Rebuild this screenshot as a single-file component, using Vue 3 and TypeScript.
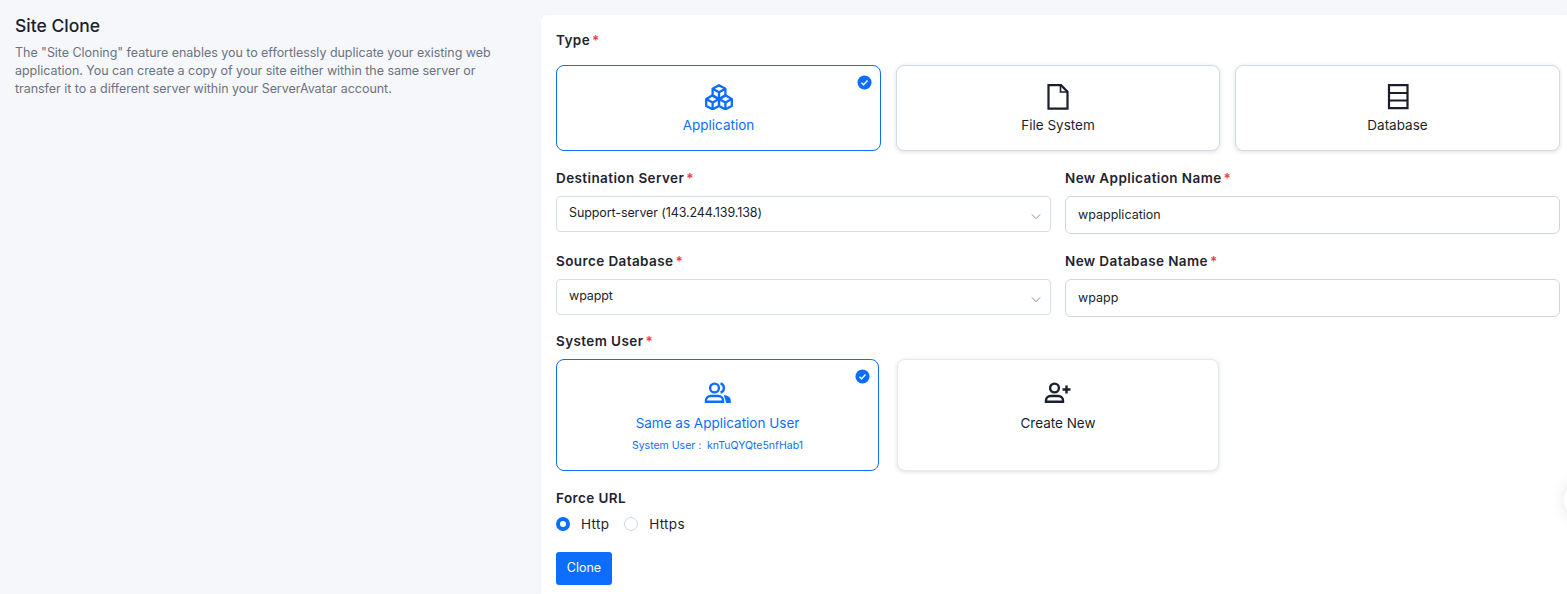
<script setup lang="ts">
import { ref } from 'vue'

const cloneType = ref('application')
const systemUser = ref('same')
const forceUrl = ref('http')

const typeOptions = [
  { id: 'application', label: 'Application' },
  { id: 'file', label: 'File System' },
  { id: 'database', label: 'Database' },
]
</script>

<template>
  <div class="page">
    <aside class="intro">
      <h1>Site Clone</h1>
      <p>The "Site Cloning" feature enables you to effortlessly duplicate your existing web application. You can create a copy of your site either within the same server or transfer it to a different server within your ServerAvatar account.</p>
    </aside>

    <main class="panel">
      <label class="label">Type<span class="req">*</span></label>
      <div class="type-grid">
        <button
          v-for="opt in typeOptions"
          :key="opt.id"
          class="card"
          :class="{ active: cloneType === opt.id }"
          @click="cloneType = opt.id"
        >
          <svg v-if="cloneType === opt.id" class="tick" viewBox="0 0 16 16">
            <circle cx="8" cy="8" r="7.5" fill="#0d6efd" />
            <path d="M4.8 8.3l2.2 2.1 4.2-4.5" fill="none" stroke="#fff" stroke-width="1.5" />
          </svg>
          <svg v-if="opt.id === 'application'" class="icon" viewBox="0 0 28 26" fill="none" stroke="currentColor" stroke-width="2.3" stroke-linejoin="round">
            <path d="M14 1.2l6.4 3.5v7L14 15.2l-6.4-3.5v-7z" />
            <path d="M7.6 4.7l6.4 3.6 6.4-3.6M14 8.3v6.9" />
            <path d="M7.6 11.3l6.4 3.6v7l-6.4 3.4-6.4-3.4v-7z" />
            <path d="M1.2 14.9l6.4 3.5 6.4-3.5M7.6 18.4v6.9" />
            <path d="M20.4 11.3l6.4 3.6v7l-6.4 3.4-6.4-3.4v-7z" />
            <path d="M14 14.9l6.4 3.5 6.4-3.5M20.4 18.4v6.9" />
          </svg>
          <svg v-else-if="opt.id === 'file'" class="icon" viewBox="0 0 28 26" fill="none" stroke="currentColor" stroke-width="2.2">
            <path d="M4.5 1.2h12.5l6.5 6.5v17h-19z" />
            <path d="M16.5 1.2v6.8h7" stroke-width="1.6" />
          </svg>
          <svg v-else class="icon" viewBox="0 0 28 26" fill="none" stroke="currentColor" stroke-width="2.2">
            <path d="M5 1.2h18.5v23H5z" />
            <path d="M5 9h18.5M5 16.5h18.5" />
          </svg>
          <span class="card-title">{{ opt.label }}</span>
        </button>
      </div>

      <div class="fields">
        <div class="field">
          <label class="label">Destination Server<span class="req">*</span></label>
          <div class="select">
            <span>Support-server (143.244.139.138)</span>
            <svg class="chevron" viewBox="0 0 12 8"><path d="M1 1.5l5 5 5-5" fill="none" stroke="#7d838c" stroke-width="1.1" /></svg>
          </div>
        </div>
        <div class="field">
          <label class="label">New Application Name<span class="req">*</span></label>
          <input class="input" value="wpapplication" />
        </div>
        <div class="field">
          <label class="label">Source Database<span class="req">*</span></label>
          <div class="select">
            <span>wpappt</span>
            <svg class="chevron" viewBox="0 0 12 8"><path d="M1 1.5l5 5 5-5" fill="none" stroke="#7d838c" stroke-width="1.1" /></svg>
          </div>
        </div>
        <div class="field">
          <label class="label">New Database Name<span class="req">*</span></label>
          <input class="input" value="wpapp" />
        </div>
      </div>

      <label class="label">System User<span class="req">*</span></label>
      <div class="user-grid">
        <button class="card tall" :class="{ active: systemUser === 'same' }" @click="systemUser = 'same'">
          <svg v-if="systemUser === 'same'" class="tick" viewBox="0 0 16 16">
            <circle cx="8" cy="8" r="7.5" fill="#0d6efd" />
            <path d="M4.8 8.3l2.2 2.1 4.2-4.5" fill="none" stroke="#fff" stroke-width="1.5" />
          </svg>
          <svg class="icon small" viewBox="0 0 28 21" fill="none" stroke="currentColor" stroke-width="2.4">
            <circle cx="10.5" cy="6" r="4.4" />
            <path d="M2 19.800v-1.300c0-2.600 2-4.500 4.600-4.500h7.800c2.600 0 4.600 1.900 4.600 4.500v1.300H2z" />
            <path d="M16.500 1.400a4.800 4.800 0 0 1 0 9.200" />
            <path d="M20 13.600c3.300.4 6.200 2.200 6.200 5.200v2.200h-4" fill="currentColor" stroke-width="1.200" />
          </svg>
          <span class="card-title">Same as Application User</span>
          <span class="card-sub" v-if="systemUser === 'same'">System User :&nbsp; knTuQYQte5nfHab1</span>
        </button>
        <button class="card tall" :class="{ active: systemUser === 'new' }" @click="systemUser = 'new'">
          <svg class="icon small" viewBox="0 0 28 21" fill="none" stroke="currentColor" stroke-width="2.4">
            <circle cx="10.500" cy="6" r="4.400" />
            <path d="M2 19.800v-1.300c0-2.600 2-4.500 4.600-4.500h7.800c2.600 0 4.600 1.900 4.600 4.500v1.300H2z" />
            <path d="M22.500 3.500v8M18.500 7.500h8" />
          </svg>
          <span class="card-title">Create New</span>
        </button>
      </div>

      <label class="label force">Force URL</label>
      <div class="radios">
        <label class="radio" @click="forceUrl = 'http'">
          <span class="dot" :class="{ on: forceUrl === 'http' }"></span>Http
        </label>
        <label class="radio" @click="forceUrl = 'https'">
          <span class="dot" :class="{ on: forceUrl === 'https' }"></span>Https
        </label>
      </div>

      <button class="clone">Clone</button>
    </main>

    <div class="chat-shadow"></div>
  </div>
</template>

<style>
html,
body {
  margin: 0;
  overflow: hidden;
}
</style>

<style scoped>
.page {
  display: grid;
  grid-template-columns: 541px 1fr;
  height: 594px;
  padding-top: 15px;
  box-sizing: border-box;
  background: #f6f7fb;
  font-family: Inter, "Liberation Sans", sans-serif;
  color: #1a1f2b;
  overflow: hidden;
  position: relative;
}

.intro {
  padding: 1px 46px 0 15px;
}

.intro h1 {
  margin: 0;
  font-size: 17.5px;
  line-height: 20px;
  font-weight: 500;
}

.intro p {
  margin: 8px 0 0;
  font-size: 12.5px;
  line-height: 18px;
  color: #6c727e;
  letter-spacing: -0.04px;
}

.panel {
  background: #fff;
  border-radius: 6px 0 0 0;
  padding: 16px 7px 0 15px;
  box-shadow: 0 0 2px rgba(40, 50, 80, 0.05);
}

.label {
  display: block;
  font-size: 13.5px;
  line-height: 18px;
  font-weight: 600;
  letter-spacing: 0.4px;
  color: #1f2430;
}

.req {
  color: #f0394a;
  margin-left: 2px;
}

.type-grid {
  display: grid;
  grid-template-columns: 325px 324px 325px;
  gap: 15px;
  margin-top: 16px;
}

.card {
  position: relative;
  display: flex;
  flex-direction: column;
  align-items: center;
  height: 86px;
  padding: 18px 0 0;
  box-sizing: border-box;
  background: #fff;
  border: 1px solid #d3dae6;
  border-radius: 8px;
  box-shadow: 0 1px 4px rgba(40, 50, 80, 0.16);
  color: #1a1f2b;
  font-family: inherit;
  cursor: pointer;
}

.card.active {
  border-color: #0d6efd;
  color: #0d6efd;
  box-shadow: none;
}

.card.tall {
  height: 112px;
  padding-top: 22px;
}

.card.tall:not(.active) {
  border-color: #e6e9f0;
}

.tick {
  position: absolute;
  top: 9px;
  right: 8px;
  width: 15px;
  height: 15px;
}

.icon {
  width: 28px;
  height: 26px;
}

.icon.small {
  height: 21px;
}

.card-title {
  margin-top: 7px;
  font-size: 13.5px;
  line-height: 16px;
}

.tall .card-title {
  margin-top: 12px;
}

.card-sub {
  margin-top: 8px;
  font-size: 10.5px;
  line-height: 13px;
}

.fields {
  display: grid;
  grid-template-columns: 495px 495px;
  column-gap: 14px;
  row-gap: 18px;
  margin-top: 18px;
  margin-bottom: 15px;
}

.field .label {
  margin-bottom: 9px;
}

.select,
.input {
  display: flex;
  align-items: center;
  justify-content: space-between;
  width: 100%;
  box-sizing: border-box;
  background: #fff;
  font-family: inherit;
  font-size: 12.5px;
  color: #1a1f2b;
}

.select {
  height: 36px;
  padding: 0 12px 3px;
  border: 1px solid #d8dee8;
  border-radius: 4px;
  letter-spacing: -0.1px;
}

.input {
  height: 38px;
  padding: 0 12px 2px;
  border: 1px solid #ced5e2;
  border-radius: 6px;
  outline: none;
}

.chevron {
  width: 10px;
  height: 7px;
  margin: 8px -3px 0 0;
}

.user-grid {
  display: grid;
  grid-template-columns: 323px 322px;
  gap: 18px;
  margin-top: 9px;
}

.force {
  margin-top: 18px;
}

.radios {
  display: flex;
  gap: 15px;
  margin-top: 9px;
}

.radio {
  display: flex;
  align-items: center;
  gap: 11px;
  font-size: 13.5px;
  line-height: 16px;
  letter-spacing: 0.3px;
  cursor: pointer;
}

.dot {
  width: 14px;
  height: 14px;
  box-sizing: border-box;
  border: 1px solid #ced5e2;
  border-radius: 50%;
  background: #fff;
}

.dot.on {
  border: 4px solid #0d6efd;
}

.clone {
  display: block;
  margin-top: 20px;
  width: 56px;
  height: 33px;
  padding: 0 0 2px;
  border: 0;
  border-radius: 3px;
  background: #0d6efd;
  color: #fff;
  font-family: inherit;
  font-size: 12.5px;
}

.chat-shadow {
  position: absolute;
  left: 1564px;
  top: 478px;
  width: 44px;
  height: 44px;
  border-radius: 50%;
  background: #fff;
  box-shadow: 0 0 16px rgba(0, 0, 0, 0.1);
}
</style>
